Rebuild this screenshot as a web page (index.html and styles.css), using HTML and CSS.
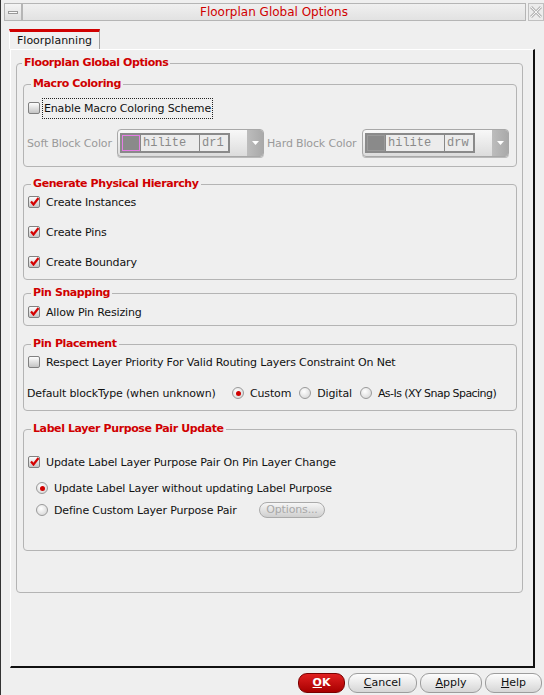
FILE: index.html
```html
<!DOCTYPE html>
<html>
<head>
<meta charset="utf-8">
<link rel="stylesheet" href="styles.css">
</head>
<body>
<div class="window">
  <div class="titlebar">
    <div class="tb-min"><span class="min-bar"></span></div>
    <div class="tb-title">Floorplan Global Options</div>
    <div class="tb-close">
      <svg width="14" height="14" viewBox="0 0 14 14"><path d="M2 2 L12 12 M12 2 L2 12" stroke="#b8b8b8" stroke-width="3" fill="none"/><path d="M2 2 L12 12 M12 2 L2 12" stroke="#f4f4f4" stroke-width="1" fill="none"/></svg>
    </div>
  </div>
  <div class="tabs">
    <div class="tab">Floorplanning</div>
  </div>
  <div class="panel">
    <fieldset class="outer">
      <legend>Floorplan Global Options</legend>

      <fieldset class="grp macro">
        <legend>Macro Coloring</legend>
        <div class="row r1"><span class="cb"></span><span class="focus">Enable Macro Coloring Scheme</span></div>
        <div class="row colors">
          <span class="dim lbl-soft">Soft Block Color</span>
          <div class="combo">
            <div class="cframe">
              <span class="swatch pink"></span>
              <span class="cell hl">hilite</span>
              <span class="cell pur">dr1</span>
            </div>
            <span class="cspace"></span>
            <span class="cbtn"><svg width="7" height="4" viewBox="0 0 7 4"><path d="M0 0 H7 L3.5 4 Z" fill="#fff"/></svg></span>
          </div>
          <span class="dim lbl-hard">Hard Block Color</span>
          <div class="combo">
            <div class="cframe">
              <span class="swatch gray"></span>
              <span class="cell hl">hilite</span>
              <span class="cell pur">drw</span>
            </div>
            <span class="cspace"></span>
            <span class="cbtn"><svg width="7" height="4" viewBox="0 0 7 4"><path d="M0 0 H7 L3.5 4 Z" fill="#fff"/></svg></span>
          </div>
        </div>
      </fieldset>

      <fieldset class="grp gph">
        <legend>Generate Physical Hierarchy</legend>
        <div class="row"><span class="cb on"></span>Create Instances</div>
        <div class="row"><span class="cb on"></span>Create Pins</div>
        <div class="row"><span class="cb on"></span>Create Boundary</div>
      </fieldset>

      <fieldset class="grp snap">
        <legend>Pin Snapping</legend>
        <div class="row"><span class="cb on"></span>Allow Pin Resizing</div>
      </fieldset>

      <fieldset class="grp place">
        <legend>Pin Placement</legend>
        <div class="row"><span class="cb"></span>Respect Layer Priority For Valid Routing Layers Constraint On Net</div>
        <div class="row r2">
          <span class="bt-lbl">Default blockType (when unknown)</span>
          <span class="rb on"></span><span class="opt">Custom</span>
          <span class="rb"></span><span class="opt">Digital</span>
          <span class="rb"></span><span class="opt tight">As-Is (XY Snap Spacing)</span>
        </div>
      </fieldset>

      <fieldset class="grp label">
        <legend>Label Layer Purpose Pair Update</legend>
        <div class="row r1"><span class="cb on"></span>Update Label Layer Purpose Pair On Pin Layer Change</div>
        <div class="row ind r2"><span class="rb on"></span>Update Label Layer without updating Label Purpose</div>
        <div class="row ind"><span class="rb"></span><span class="dcl">Define Custom Layer Purpose Pair</span><span class="optbtn">Options...</span></div>
      </fieldset>
    </fieldset>
  </div>
  <div class="buttons">
    <span class="btn ok"><u>O</u>K</span>
    <span class="btn cancel"><u>C</u>ancel</span>
    <span class="btn apply"><u>A</u>pply</span>
    <span class="btn help"><u>H</u>elp</span>
  </div>
</div>
</body>
</html>
```

FILE: styles.css
```css
html, body {
  margin: 0;
  padding: 0;
  background: #efefef;
}
body {
  width: 544px;
  height: 695px;
  overflow: hidden;
  font-family: "DejaVu Sans", sans-serif;
  font-size: 11px;
  letter-spacing: -0.15px;
  color: #111;
  border-left: 1px solid #333;
  box-sizing: border-box;
}
.window {
  padding-left: 2px;
}
.titlebar {
  display: flex;
  height: 18px;
  margin-top: 3px;
  margin-left: 1px;
}
.tb-min {
  width: 18px;
  height: 18px;
  box-sizing: border-box;
  border: 1px solid #b5b5b5;
  background: linear-gradient(#f4f4f4, #dedede);
  display: flex;
  align-items: center;
  justify-content: center;
}
.min-bar {
  width: 10px;
  height: 3px;
  border: 1px solid #999;
  background: #fafafa;
  box-sizing: border-box;
}
.tb-title {
  flex: 1;
  height: 18px;
  box-sizing: border-box;
  border: 1px solid #b5b5b5;
  background: linear-gradient(#f0f0f0, #e2e2e2);
  color: #d00000;
  font-size: 12px;
  letter-spacing: 0;
  line-height: 16px;
  text-align: center;
}
.tb-close {
  width: 16px;
  height: 18px;
  box-sizing: border-box;
  border: 1px solid #c0c0c0;
  background: #ececec;
  display: flex;
  align-items: center;
  justify-content: center;
  margin-left: 2px;
}
.tabs {
  display: flex;
  padding-left: 6px;
  margin-top: 8px;
  height: 20px;
}
.tab {
  width: 91px;
  height: 20px;
  box-sizing: border-box;
  border-top: 3px solid #d00000;
  border-left: 1px solid #fff;
  border-right: 1px solid #a0a0a0;
  background: #f0f0f0;
  padding-left: 7px;
  line-height: 18px;
  letter-spacing: 0;
}
.panel {
  margin-left: 7px;
  width: 525px;
  height: 619px;
  box-sizing: border-box;
  border-top: 1px solid #fff;
  border-left: 1px solid #fff;
  border-right: 2px solid #111;
  border-bottom: 2px solid #111;
  padding: 6px 10px 0 5px;
}
fieldset {
  margin: 0;
  border: 1px solid #b4b4b4;
  border-radius: 4px;
  min-width: 0;
}
legend {
  color: #d00000;
  font-weight: bold;
  font-size: 11px;
  letter-spacing: -0.4px;
  line-height: 14px;
  padding: 0 2px;
}
.outer {
  padding: 0 5px 41px 6px;
}
.outer > legend {
  margin-left: -1px;
}
.grp {
  padding: 0 4px;
  margin-top: 11px;
}
.grp > legend {
  margin-left: 3px;
}
.macro { margin-top: 7px; padding-bottom: 9px; }
.gph { margin-top: 10px; padding-bottom: 6px; }
.snap { margin-top: 6px; padding-bottom: 2px; }
.place { padding-bottom: 6px; }
.label { padding-bottom: 29px; }

.row {
  display: flex;
  align-items: center;
  height: 22px;
  white-space: nowrap;
}
.row > * { flex: none; }
.gph .row + .row { margin-top: 8px; }
.snap .row { margin-top: 1px; }
.place .r2 { margin-top: 9px; }
.label .r1 { margin-top: 15px; }
.label .r2 { margin-top: 4px; }
.macro .r1 { margin-top: 6px; }
.ind { padding-left: 8px; }

.cb {
  width: 12px;
  height: 12px;
  box-sizing: border-box;
  border: 1px solid #808080;
  border-radius: 2px;
  background: linear-gradient(#fdfdfd, #c4c4c4);
  margin-right: 6px;
  position: relative;
}
.cb.on::after {
  content: "";
  position: absolute;
  left: 1px;
  top: 0px;
  width: 9px;
  height: 9px;
  background: url("data:image/svg+xml;utf8,<svg xmlns='http://www.w3.org/2000/svg' width='9' height='9' viewBox='0 0 9 9'><path d='M1 4.5 L3.5 7.5 L8.5 1' stroke='%23d40000' stroke-width='2.2' fill='none'/></svg>") no-repeat;
}
.rb {
  width: 12px;
  height: 12px;
  box-sizing: border-box;
  border: 1px solid #9a9a9a;
  border-radius: 50%;
  background: radial-gradient(circle at 40% 35%, #ffffff, #d0d0d0);
  margin-right: 6px;
  position: relative;
}
.rb.on::after {
  content: "";
  position: absolute;
  left: 2.5px;
  top: 2.5px;
  width: 5px;
  height: 5px;
  border-radius: 50%;
  background: #d00000;
}
.focus {
  outline: 1px dotted #222;
  padding: 3px 1px;
  margin-left: -3px;
}
.colors {
  height: 28px;
  margin-top: 10px;
}
.dim { color: #9a9a9a; }
.lbl-soft { margin-left: -1px; width: 90px; }
.lbl-hard { margin-left: 3px; width: 95px; }
.combo {
  width: 147px;
  height: 28px;
  box-sizing: border-box;
  border: 1px solid #a8a8a8;
  border-radius: 4px;
  background: linear-gradient(#f8f8f8, #dcdcdc);
  display: flex;
  align-items: center;
  padding-left: 2px;
  box-shadow: 0 1px 0 #bbb;
}
.cframe {
  display: flex;
  height: 20px;
  box-sizing: border-box;
  border: 2px solid #8a8a8a;
  background: #888;
  gap: 1px;
}
.swatch {
  width: 18px;
  height: 16px;
  box-sizing: border-box;
  background: #8a8a8a;
}
.swatch.pink { border: 1px solid #e57ee5; }
.swatch.gray { border: 1px solid #9a9a9a; background: #8a8a8a; }
.cell {
  height: 16px;
  background: #ececec;
  font-family: "Liberation Mono", "DejaVu Sans Mono", monospace;
  font-size: 12px;
  letter-spacing: 0;
  color: #8a8a8a;
  line-height: 16px;
  padding-left: 2px;
  box-sizing: border-box;
}
.hl { width: 58px; }
.pur { width: 28px; }
.cspace { flex: 1 !important; }
.cbtn {
  width: 16px;
  height: 26px;
  background: linear-gradient(90deg, #bdbdbd, #a9a9a9);
  border-radius: 0 3px 3px 0;
  display: flex;
  align-items: center;
  justify-content: center;
}
.bt-lbl { margin-left: -1px; width: 205px; }
.opt { margin-right: 8px; }
.tight { letter-spacing: -0.55px; }
.dcl { width: 205px; }
.optbtn {
  width: 66px;
  height: 16px;
  box-sizing: border-box;
  border: 1px solid #aaa;
  border-radius: 8px;
  background: linear-gradient(#f6f6f6, #cfcfcf);
  color: #a8a8a8;
  text-align: center;
  line-height: 14px;
}
.buttons {
  display: flex;
  justify-content: flex-end;
  gap: 3px;
  margin-top: 5px;
  padding-right: 2px;
}
.btn {
  height: 20px;
  box-sizing: border-box;
  border: 1px solid #9d9d9d;
  border-radius: 9px;
  background: linear-gradient(#fdfdfd, #d6d6d6);
  text-align: center;
  line-height: 18px;
  letter-spacing: 0;
  color: #111;
}
.btn u { text-underline-offset: 1px; }
.ok {
  width: 47px;
  background: linear-gradient(#e02020, #a80000);
  border-color: #7a0000;
  color: #fff;
  font-weight: bold;
}
.cancel { width: 69px; }
.apply { width: 62px; }
.help { width: 57px; }
```
